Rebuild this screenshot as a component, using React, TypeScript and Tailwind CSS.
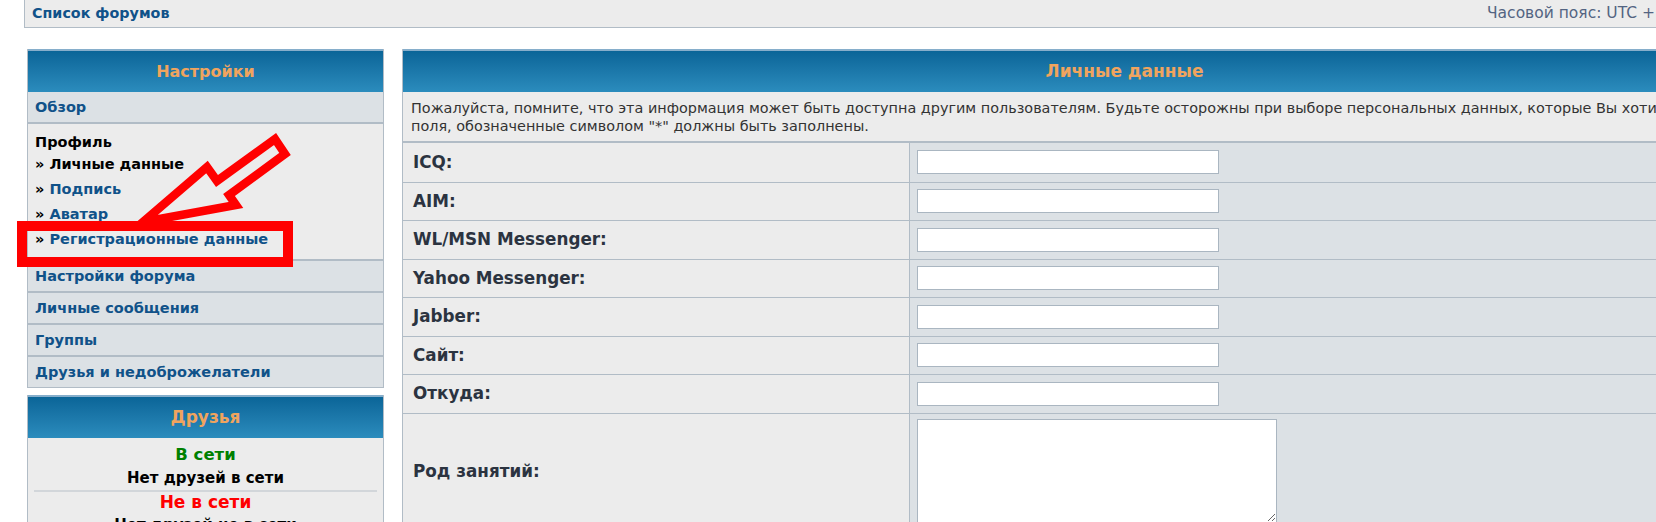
import React from "react";

const navRows = [
  "Настройки форума",
  "Личные сообщения",
  "Группы",
  "Друзья и недоброжелатели",
];

const fields = [
  "ICQ:",
  "AIM:",
  "WL/MSN Messenger:",
  "Yahoo Messenger:",
  "Jabber:",
  "Сайт:",
  "Откуда:",
];

function PanelHeader({ title, size }: { title: string; size: string }) {
  return (
    <div
      className={
        "h-[43px] border-t-2 border-[#86aecb] bg-linear-to-b from-[#0a6598] to-[#2b8cbd] flex items-center justify-center font-bold text-[#f0a45e] " +
        size
      }
    >
      {title}
    </div>
  );
}

function SideMenu() {
  return (
    <div className="w-[357px] border-x border-b border-[#b1bcc6]">
      <PanelHeader title="Настройки" size="text-[16px]" />
      <div className="h-[32px] bg-[#dce1e5] border-b-2 border-[#b1bcc6] pl-[7px] pt-[2px] flex items-center text-[14.5px] font-bold text-[#105289]">
        Обзор
      </div>
      <div className="bg-[#ececec] pl-[7px] pt-[8px] pb-[7px] text-[14.5px] font-bold">
        <div className="leading-[20px] text-black">Профиль</div>
        <div className="leading-[25px] text-black">» Личные данные</div>
        <div className="leading-[25px]">
          <span className="text-black">» </span>
          <span className="text-[#105289]">Подпись</span>
        </div>
        <div className="leading-[25px]">
          <span className="text-black">» </span>
          <span className="text-[#105289]">Аватар</span>
        </div>
        <div className="leading-[25px]">
          <span className="text-black">» </span>
          <span className="text-[#105289]">Регистрационные данные</span>
        </div>
      </div>
      {navRows.map((r) => (
        <div
          key={r}
          className="h-[32px] bg-[#dce1e5] border-t-2 border-[#b1bcc6] pl-[7px] pt-[2px] flex items-center text-[14.5px] font-bold text-[#105289]"
        >
          {r}
        </div>
      ))}
    </div>
  );
}

function Friends() {
  return (
    <div className="w-[357px] mt-[7px] border-x border-[#b1bcc6]">
      <PanelHeader title="Друзья" size="text-[17px]" />
      <div className="bg-[#ececec] pt-[7px] px-[6px] text-center font-bold h-[200px]">
        <div className="leading-[20px] text-[16.5px] text-[#008000]">В сети</div>
        <div className="leading-[20px] mt-[3px] text-[15px] text-black">Нет друзей в сети</div>
        <div className="h-[2px] bg-[#d2d6da] mt-[2px]" />
        <div className="leading-[20px] text-[17px] text-[#ff0000]">Не в сети</div>
        <div className="leading-[20px] mt-[3px] text-[15px] text-black">Нет друзей не в сети</div>
      </div>
    </div>
  );
}

function ProfileForm() {
  return (
    <div className="w-[1444px] shrink-0 border-l border-[#b1bcc6]">
      <PanelHeader title="Личные данные" size="text-[17px]" />
      <div className="bg-[#ececec] px-[8px] pt-[7px] pb-[6px] text-[14.4px] leading-[18px] text-[#333] whitespace-nowrap">
        Пожалуйста, помните, что эта информация может быть доступна другим пользователям. Будьте осторожны при выборе персональных данных, которые Вы хотите сделать доступными для всех. Все
        <br />
        поля, обозначенные символом "*" должны быть заполнены.
      </div>
      <div className="border-t-2 border-[#b1bcc6]">
        {fields.map((f, i) => (
          <div
            key={f}
            className={
              "flex h-[38.5px] " + (i > 0 ? "border-t border-[#b1bcc6]" : "")
            }
          >
            <div className="w-[506px] bg-[#ececec] pl-[10px] flex items-center text-[16.8px] font-bold text-[#2b3340]">
              {f}
            </div>
            <div className="flex-1 bg-[#dce1e5] border-l border-[#b1bcc6] pl-[7px] flex items-center">
              <input
                type="text"
                className="w-[302px] h-[24px] bg-white border border-[#aab6c1] outline-none"
              />
            </div>
          </div>
        ))}
        <div className="flex h-[118px] border-t border-[#b1bcc6]">
          <div className="w-[506px] bg-[#ececec] pl-[10px] flex items-center text-[16.8px] font-bold text-[#2b3340]">
            Род занятий:
          </div>
          <div className="flex-1 bg-[#dce1e5] border-l border-[#b1bcc6] pl-[7px] pt-[5px]">
            <textarea className="block w-[360px] h-[104px] bg-white border border-[#aab6c1] outline-none resize" />
          </div>
        </div>
      </div>
    </div>
  );
}

export default function App() {
  return (
    <div className="relative w-[1656px] h-[522px] overflow-hidden bg-white font-['DejaVu_Sans',Verdana,sans-serif]">
      <div className="ml-[24px] h-[28px] bg-[#ececec] border-l border-b border-[#b1bcc6] pl-[7px] flex items-center justify-between">
        <span className="text-[14.3px] font-bold text-[#105289]">Список форумов</span>
        <span className="text-[15.5px] text-[#536482] pr-[1px]">Часовой пояс: UTC +</span>
      </div>
      <div className="flex mt-[21px] pl-[27px] gap-[18px]">
        <div className="shrink-0">
          <SideMenu />
          <Friends />
        </div>
        <ProfileForm />
      </div>

      {/* annotation: red box + arrow */}
      <div className="absolute left-[17px] top-[221px] w-[276px] h-[46px] border-[10px] border-[#ff0000]" />
      <svg
        className="absolute left-0 top-0 pointer-events-none"
        width="320"
        height="280"
        viewBox="0 0 320 280"
      >
        <polygon
          points="143,222 207,167 217,181 275,139 285,154 229,195 236,205"
          fill="none"
          stroke="#ff0000"
          strokeWidth="8.5"
          strokeLinejoin="miter"
        />
      </svg>
    </div>
  );
}
